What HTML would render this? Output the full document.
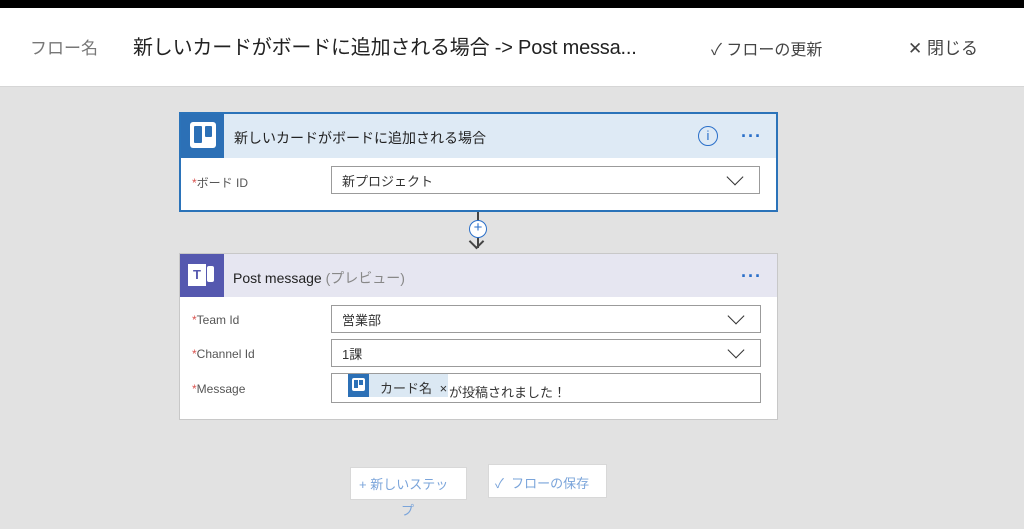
<!DOCTYPE html><html><head><meta charset="utf-8"><style>
*{box-sizing:border-box;margin:0;padding:0}
body{width:1024px;height:529px;background:#e2e2e2;font-family:"Liberation Sans","Noto Sans CJK JP",sans-serif;position:relative;overflow:hidden;color:#333}
.a{position:absolute}
.sel{position:absolute;background:#fff;border:1px solid #9b9b9b;font-size:13px;padding-left:10px;display:flex;align-items:center}
.chev{position:absolute;right:18px;top:50%;width:12px;height:12px;border-right:1.6px solid #333;border-bottom:1.6px solid #333;transform:translateY(-75%) rotate(45deg)}
.lbl{position:absolute;font-size:12px;color:#555}
.lbl b{color:#d9534f;font-weight:normal}
.dots{position:absolute;color:#2a6fc9;font-size:18px;letter-spacing:1px;font-weight:bold}
</style></head><body>
<div class="a" style="left:0;top:0;width:1024px;height:8px;background:#000"></div>
<div class="a" style="left:0;top:8px;width:1024px;height:79px;background:#fff;border-bottom:1px solid #d6d6d6"></div>
<div class="a" style="left:30px;top:34px;font-size:17px;color:#777">フロー名</div>
<div class="a" style="left:133px;top:31px;font-size:20px;color:#222;letter-spacing:-0.2px">新しいカードがボードに追加される場合 -&gt; Post messa...</div>
<div class="a" style="left:711px;top:36px;font-size:16px;color:#444">✓ フローの更新</div>
<div class="a" style="left:908px;top:34px;font-size:17px;color:#444">✕ 閉じる</div>

<div class="a" style="left:179px;top:112px;width:599px;height:100px;background:#fff;border:2px solid #2b73b9"></div>
<div class="a" style="left:181px;top:114px;width:595px;height:44px;background:#deeaf5"></div>
<div class="a" style="left:181px;top:114px;width:43px;height:44px;background:#2c70b6"></div>
<div class="a" style="left:190px;top:122px;width:26px;height:26px;background:#fff;border-radius:3px"></div>
<div class="a" style="left:194px;top:126px;width:8px;height:17px;background:#2c70b6;border-radius:1px"></div>
<div class="a" style="left:205px;top:126px;width:7px;height:11px;background:#2c70b6;border-radius:1px"></div>
<div class="a" style="left:234px;top:128px;font-size:14px;color:#222">新しいカードがボードに追加される場合</div>
<div class="a" style="left:698px;top:126px;width:20px;height:20px;border:1.5px solid #2a6fc9;border-radius:50%;color:#2a6fc9;font-size:13px;text-align:center;line-height:17px">i</div>
<div class="dots" style="left:741px;top:126px">···</div>
<div class="lbl" style="left:192px;top:174px"><b>*</b>ボード ID</div>
<div class="sel" style="left:331px;top:166px;width:429px;height:28px">新プロジェクト<span class="chev"></span></div>

<div class="a" style="left:477px;top:212px;width:2px;height:36px;background:#444"></div>
<div class="a" style="left:469px;top:220px;width:18px;height:18px;border:1.5px solid #2a6fc9;border-radius:50%;background:#fff;color:#2a6fc9;font-size:15px;line-height:14px;text-align:center">+</div>
<div class="a" style="left:471px;top:236px;width:11px;height:11px;border-right:2px solid #444;border-bottom:2px solid #444;transform:rotate(45deg)"></div>

<div class="a" style="left:179px;top:253px;width:599px;height:167px;background:#fff;border:1px solid #c8c8c8"></div>
<div class="a" style="left:180px;top:254px;width:597px;height:43px;background:#e6e6f1"></div>
<div class="a" style="left:180px;top:254px;width:44px;height:43px;background:#5558af"></div>
<div class="a" style="left:188px;top:264px;width:18px;height:22px;background:#fff;color:#5558af;font-size:13px;font-weight:bold;text-align:center;line-height:22px">T</div>
<div class="a" style="left:207px;top:266px;width:7px;height:16px;background:#fff;border-radius:2px"></div>
<div class="a" style="left:233px;top:268px;font-size:14px;color:#222">Post message <span style="color:#888">(プレビュー)</span></div>
<div class="dots" style="left:741px;top:266px">···</div>
<div class="lbl" style="left:192px;top:313px"><b>*</b>Team Id</div>
<div class="sel" style="left:331px;top:305px;width:430px;height:28px">営業部<span class="chev"></span></div>
<div class="lbl" style="left:192px;top:347px"><b>*</b>Channel Id</div>
<div class="sel" style="left:331px;top:339px;width:430px;height:28px">1課<span class="chev"></span></div>
<div class="lbl" style="left:192px;top:382px"><b>*</b>Message</div>
<div class="sel" style="left:331px;top:373px;width:430px;height:30px"></div>
<div class="a" style="left:348px;top:374px;width:100px;height:23px;background:#dbe8f3"></div>
<div class="a" style="left:348px;top:374px;width:21px;height:23px;background:#2c70b6"></div>
<div class="a" style="left:352px;top:378px;width:13px;height:13px;background:#fff;border-radius:2px"></div>
<div class="a" style="left:354px;top:380px;width:4px;height:8px;background:#2c70b6"></div>
<div class="a" style="left:359px;top:380px;width:4px;height:5px;background:#2c70b6"></div>
<div class="a" style="left:380px;top:378px;font-size:13px;color:#333">カード名 <span style="margin-left:4px">×</span></div>
<div class="a" style="left:449px;top:382px;font-size:13px;color:#333">が投稿されました！</div>

<div class="a" style="left:350px;top:467px;width:117px;height:33px;background:#fff;border:1px solid #d8d8d8"></div>
<div class="a" style="left:359px;top:474px;font-size:13px;color:#7aa4da">+ 新しいステッ</div>
<div class="a" style="left:401px;top:500px;font-size:13px;color:#7aa4da">プ</div>
<div class="a" style="left:488px;top:464px;width:119px;height:34px;background:#fff;border:1px solid #d8d8d8"></div>
<div class="a" style="left:495px;top:473px;font-size:13px;color:#7aa4da">✓ &nbsp;フローの保存</div>
</body></html>
